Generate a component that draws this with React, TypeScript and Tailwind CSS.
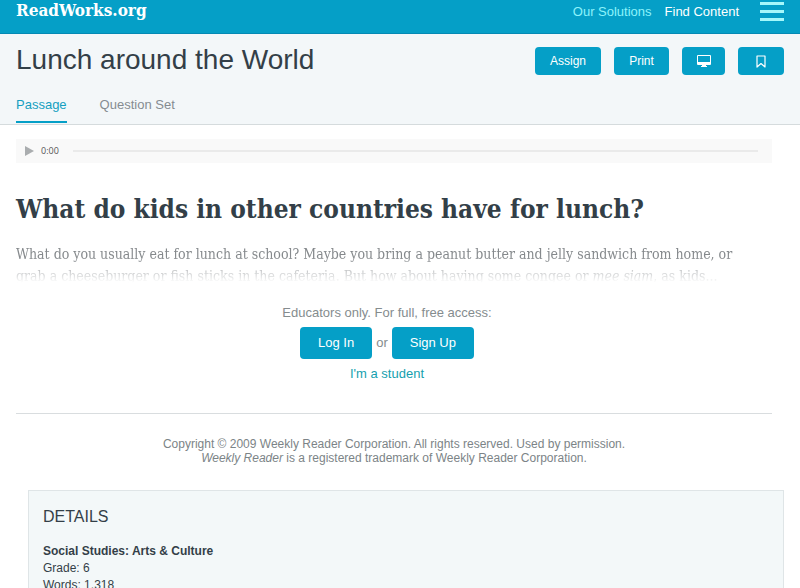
import { clsx } from 'clsx';

interface IActionButtonProps {
  children: React.ReactNode;
  label?: string;
  className?: string;
}

const tabs = [
  { href: '#passage', label: 'Passage', active: true },
  { href: '#questions', label: 'Question Set', active: false },
];

function ActionButton({ children, label, className }: IActionButtonProps) {
  return (
    <button
      type="button"
      aria-label={label}
      className={clsx(
        'flex h-7 items-center justify-center rounded bg-[#059fc7] text-xs text-white',
        className,
      )}
    >
      {children}
    </button>
  );
}

function MonitorIcon() {
  return (
    <svg width="14" height="12" viewBox="0 0 14 12" fill="currentColor" aria-hidden="true">
      <path
        fillRule="evenodd"
        d="M1 0h12q1 0 1 1v8q0 1-1 1H9v1h1v1H4v-1h1v-1H1q-1 0-1-1V1q0-1 1-1ZM1 1v6h12V1Z"
      />
    </svg>
  );
}

function BookmarkIcon() {
  return (
    <svg
      width="10"
      height="13"
      viewBox="0 0 10 13"
      fill="none"
      stroke="currentColor"
      strokeWidth="1.2"
      strokeLinejoin="round"
      aria-hidden="true"
    >
      <path d="M1 1h8v11L5 8.500 1 12Z" />
    </svg>
  );
}

function SiteHeader() {
  return (
    <header className="flex h-[34px] items-start justify-between border-b border-[#0489b4] bg-[#059fc7] px-4">
      <a
        href="#home"
        className="font-['DejaVu_Serif_Condensed','DejaVu_Serif',serif] text-[17px] leading-5 font-bold text-white"
      >
        ReadWorks.org
      </a>
      <nav aria-label="Main" className="flex items-start gap-[13px] text-[13px] leading-6">
        <a href="#solutions" className="text-[#8df3fb]">
          Our Solutions
        </a>
        <a href="#find" className="text-white">
          Find Content
        </a>
        <button type="button" aria-label="Menu" className="ml-2 flex w-6 flex-col gap-[5px] pt-0.5">
          <span className="h-[3px] w-full bg-[#a5f8fb]" />
          <span className="h-[3px] w-full bg-[#a5f8fb]" />
          <span className="h-[3px] w-full bg-[#a5f8fb]" />
        </button>
      </nav>
    </header>
  );
}

function TitleBar() {
  return (
    <section className="border-b border-[#d5dbdd] bg-[#f3f7f9] px-4">
      <div className="flex items-start justify-between pt-[13px]">
        <h1 className="text-[28px] leading-[26px] text-[#333f48]">Lunch around the World</h1>
        <div className="flex gap-[13px]">
          <ActionButton className="w-[66px]">Assign</ActionButton>
          <ActionButton className="w-[55px]">Print</ActionButton>
          <ActionButton className="w-[43px]" label="Present">
            <MonitorIcon />
          </ActionButton>
          <ActionButton className="w-[46px]" label="Bookmark">
            <BookmarkIcon />
          </ActionButton>
        </div>
      </div>
      <nav aria-label="Passage tabs" className="flex gap-[33px] pt-5 pb-px text-[13px] leading-5">
        {tabs.map((tab) => (
          <a
            key={tab.href}
            href={tab.href}
            className={clsx(
              'border-b-2 pb-[6px]',
              tab.active
                ? 'border-[#059fc7] text-[#159fc0]'
                : 'border-transparent text-[#858c91]',
            )}
          >
            {tab.label}
          </a>
        ))}
      </nav>
    </section>
  );
}

function AudioPlayer() {
  return (
    <div className="flex h-6 items-center bg-[#f9f9f9] pr-[14px] pl-[9px]">
      <button type="button" aria-label="Play" className="text-[#aaadaf]">
        <svg width="9" height="10" viewBox="0 0 9 10" fill="currentColor" aria-hidden="true">
          <path d="M0 0 9 5 0 10Z" />
        </svg>
      </button>
      <span className="ml-[7px] w-8 font-['Open_Sans',sans-serif] text-[9px] text-[#555]">0:00</span>
      <input
        type="range"
        aria-label="Seek"
        defaultValue={0}
        className="h-0.5 min-w-0 flex-1 appearance-none bg-[#eaeaea] [&::-webkit-slider-thumb]:size-0 [&::-webkit-slider-thumb]:appearance-none"
      />
    </div>
  );
}

function Passage() {
  return (
    <article className="font-['DejaVu_Serif_Condensed','DejaVu_Serif',serif]">
      <h2 className="pt-[26px] text-[26px] leading-10 font-bold text-[#333f48]">
        What do kids in other countries have for lunch?
      </h2>
      <p className="mt-[14px] mask-linear-[to_bottom,black_30%,transparent_90%] pr-6 text-sm leading-[22px] text-[#85898c]">
        What do you usually eat for lunch at school? Maybe you bring a peanut butter and jelly
        sandwich from home, or grab a cheeseburger or fish sticks in the cafeteria. But how about
        having some congee or <em>mee siam</em>, as kids...
      </p>
    </article>
  );
}

function AccessPrompt() {
  return (
    <div className="flex flex-col items-center pt-4 pr-[14px] pb-[29px] text-[13px] leading-5 text-[#858c8e]">
      <p>Educators only. For full, free access:</p>
      <div className="mt-1 flex items-center gap-1">
        <a href="#login" className="rounded bg-[#059fc7] px-[18px] py-[6px] text-white">
          Log In
        </a>
        <span>or</span>
        <a href="#signup" className="rounded bg-[#059fc7] px-[18px] py-[6px] text-white">
          Sign Up
        </a>
      </div>
      <a href="#student" className="mt-[5px] text-[#159fae]">
        I'm a student
      </a>
    </div>
  );
}

export default function App() {
  return (
    <div className="h-screen overflow-hidden bg-white font-['Liberation_Sans',Arial,sans-serif]">
      <SiteHeader />
      <TitleBar />
      <main className="pt-[14px]">
        <div className="mr-7 ml-4">
          <AudioPlayer />
          <Passage />
          <AccessPrompt />
          <footer className="border-t border-[#d9dddf] pt-[23px] pb-[25px] text-center text-xs leading-[14px] text-[#7c8487]">
            <p>Copyright © 2009 Weekly Reader Corporation. All rights reserved. Used by permission.</p>
            <p>
              <em>Weekly Reader</em> is a registered trademark of Weekly Reader Corporation.
            </p>
          </footer>
        </div>
        <section className="mr-4 ml-7 border border-[#dfe5e7] bg-[#f3f8f9] p-[14px] text-[#333f48]">
          <h3 className="text-base leading-6">DETAILS</h3>
          <div className="mt-[14px] text-xs leading-[17px]">
            <p className="font-bold">Social Studies: Arts &amp; Culture</p>
            <p>Grade: 6</p>
            <p>Words: 1,318</p>
          </div>
        </section>
      </main>
    </div>
  );
}
